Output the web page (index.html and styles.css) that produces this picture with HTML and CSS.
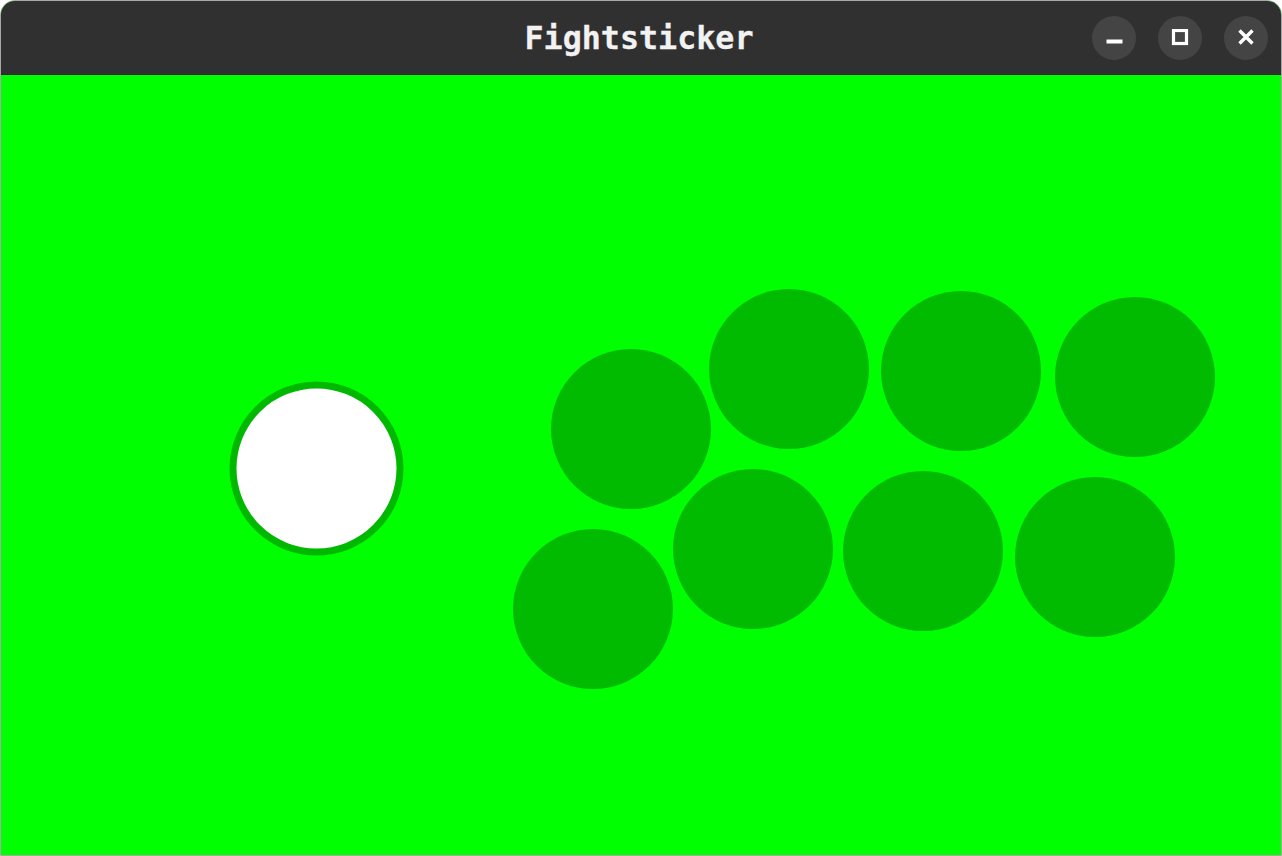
FILE: index.html
```html
<!DOCTYPE html>
<html>
<head>
<meta charset="utf-8">
<title>Fightsticker</title>
<link rel="stylesheet" href="styles.css">
</head>
<body>
<div class="window">
  <header class="titlebar">
    <div class="spacer"></div>
    <div class="title">Fightsticker</div>
    <div class="controls">
      <button class="ctl" aria-label="Minimize">
        <svg width="18" height="18" viewBox="0 0 18 18"><rect x="1.5" y="10.5" width="16" height="4" fill="#ffffff"/></svg>
      </button>
      <button class="ctl" aria-label="Maximize">
        <svg width="18" height="18" viewBox="0 0 18 18"><rect x="2.5" y="1.5" width="13" height="13" fill="none" stroke="#ffffff" stroke-width="3.2"/></svg>
      </button>
      <button class="ctl" aria-label="Close">
        <svg width="18" height="18" viewBox="0 0 18 18"><path d="M2.5 1.5 L15.5 14.5 M15.5 1.5 L2.5 14.5" stroke="#ffffff" stroke-width="3.4" stroke-linecap="butt"/></svg>
      </button>
    </div>
  </header>
  <main class="canvas">
    <svg class="stick" width="1280" height="780" viewBox="0 0 1280 780">
      <circle class="lever" cx="315.5" cy="393.5" r="83.5"/>
      <circle class="btn" cx="630" cy="354" r="80"/>
      <circle class="btn" cx="788" cy="294" r="80"/>
      <circle class="btn" cx="960" cy="296" r="80"/>
      <circle class="btn" cx="1134" cy="302" r="80"/>
      <circle class="btn" cx="592" cy="534" r="80"/>
      <circle class="btn" cx="752" cy="474" r="80"/>
      <circle class="btn" cx="922" cy="476" r="80"/>
      <circle class="btn" cx="1094" cy="482" r="80"/>
    </svg>
  </main>
</div>
</body>
</html>
```

FILE: styles.css
```css
html, body {
  margin: 0;
  padding: 0;
  background: #ffffff;
}

.window {
  box-sizing: border-box;
  width: 1282px;
  height: 856px;
  border: 1px solid #a8a8a8;
  border-radius: 15px 15px 0 0;
  overflow: hidden;
  display: flex;
  flex-direction: column;
  background: #00ff00;
}

.titlebar {
  box-sizing: border-box;
  height: 74px;
  flex: 0 0 74px;
  background: #303030;
  border-bottom: 1px solid #262626;
  display: grid;
  grid-template-columns: 1fr auto 1fr;
  align-items: center;
  padding-right: 13px;
}

.title {
  font-family: "DejaVu Sans Mono", "Liberation Mono", monospace;
  font-weight: bold;
  font-size: 31.7px;
  color: #f2f2f2;
  line-height: 1;
  margin-top: 2px;
  margin-left: 9px;
  -webkit-text-stroke: 0.3px #f2f2f2;
}

.controls {
  display: flex;
  justify-content: flex-end;
  gap: 22px;
}

.ctl {
  width: 44px;
  height: 44px;
  border-radius: 50%;
  border: none;
  padding: 0;
  background: #444444;
  display: flex;
  align-items: center;
  justify-content: center;
}

.canvas {
  flex: 1;
  background: #00ff00;
}

.stick {
  display: block;
}

.btn {
  fill: #00bb00;
}

.lever {
  fill: #ffffff;
  stroke: #00b800;
  stroke-width: 7;
}
```
